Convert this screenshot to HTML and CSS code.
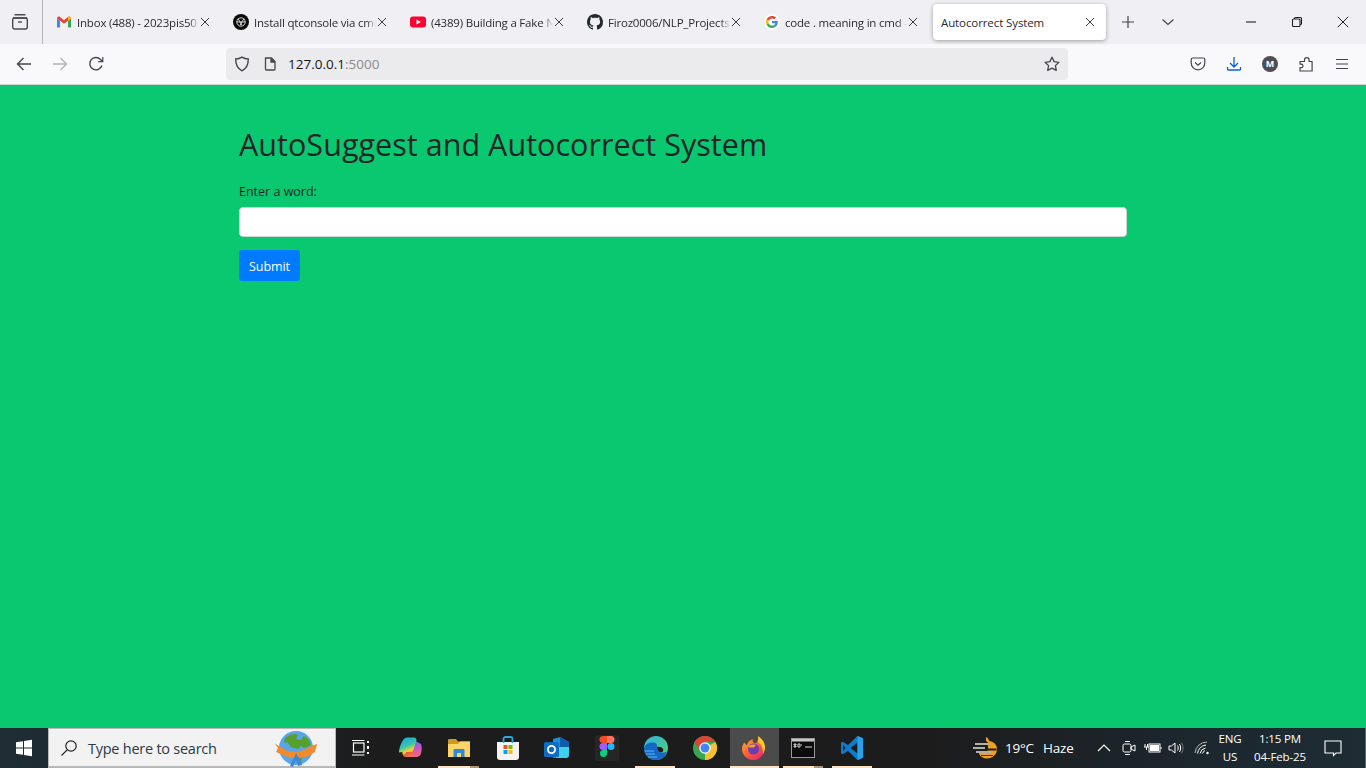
FILE: index.html
```html
<!DOCTYPE html>
<html lang="en">
<head>
<meta charset="utf-8">
<title>Autocorrect System</title>
<link rel="stylesheet" href="styles.css">
</head>
<body>
<svg class="defs" width="0" height="0" aria-hidden="true">
  <symbol id="x" viewBox="0 0 12 12"><path d="M2 2l8 8M10 2l-8 8" fill="none" stroke="currentColor" stroke-width="1"/></symbol>
</svg>
<div class="browser">
  <header class="tabbar">
    <div class="archive">
      <svg width="18" height="18" viewBox="0 0 18 18" fill="none" stroke="#4a4a50" stroke-width="1.4"><path d="M3.5 1.8h11M2 5h14"/><rect x="1.7" y="5" width="14.6" height="11" rx="2"/><path d="M7 9h4"/></svg>
    </div>
    <div class="tab">
      <svg class="fav" width="16" height="16" viewBox="0 0 16 16"><path d="M1 13.5V4l7 5 7-5v9.500h-3V7.500L8 10.500 4 7.500v6z" fill="#fff"/><path d="M1 4.500V13.500h3V6.800z" fill="#4285f4"/><path d="M15 4.500V13.500h-3V6.800z" fill="#34a853"/><path d="M1 4.500C1 2.600 3 2 4 3l4 3.200L12 3c1-1 3-.4 3 1.500L12 6.800 8 9.800 4 6.800z" fill="#ea4335"/><path d="M12 3c1-1 3-.4 3 1.500L12 6.800z" fill="#fbbc04"/></svg>
      <span class="title">Inbox (488) - 2023pis5012@gmail</span>
      <svg class="close" width="12" height="12"><use href="#x"/></svg>
    </div>
    <div class="tab">
      <svg class="fav" width="16" height="16" viewBox="0 0 16 16"><circle cx="8" cy="8" r="8" fill="#0a0a0a"/><g fill="none" stroke="#e8e8e8" stroke-width=".9"><circle cx="8" cy="8" r="4.200"/><path d="M5 4.500l4 6.800M11 4.500l-4 6.800M3.800 8h8.400"/></g></svg>
      <span class="title">Install qtconsole via cmd line</span>
      <svg class="close" width="12" height="12"><use href="#x"/></svg>
    </div>
    <div class="tab">
      <svg class="fav" width="16" height="16" viewBox="0 0 16 16"><rect y="2.500" width="16" height="11" rx="3" fill="#ff0033"/><path d="M6.500 5.500v5L11 8z" fill="#fff"/></svg>
      <span class="title">(4389) Building a Fake News App</span>
      <svg class="close" width="12" height="12"><use href="#x"/></svg>
    </div>
    <div class="tab">
      <svg class="fav" width="16" height="16" viewBox="0 0 16 16"><path fill="#24292f" d="M8 0C3.580 0 0 3.580 0 8c0 3.540 2.290 6.530 5.470 7.590.4.070.55-.17.55-.38 0-.19-.01-.82-.01-1.490-2.010.37-2.530-.49-2.690-.94-.09-.23-.48-.94-.82-1.130-.28-.15-.68-.52-.01-.53.63-.01 1.080.58 1.230.82.72 1.210 1.870.87 2.330.66.07-.52.28-.87.51-1.070-1.780-.2-3.640-.89-3.640-3.950 0-.87.31-1.590.82-2.150-.08-.2-.36-1.020.08-2.120 0 0 .67-.21 2.200.82.64-.18 1.320-.27 2-.27.68 0 1.360.09 2 .27 1.530-1.040 2.200-.82 2.200-.82.44 1.100.16 1.920.08 2.120.51.56.82 1.270.82 2.150 0 3.070-1.870 3.750-3.650 3.950.29.25.54.73.54 1.480 0 1.070-.01 1.930-.01 2.200 0 .21.15.46.55.38A8.013 8.013 0 0016 8c0-4.420-3.580-8-8-8z"/></svg>
      <span class="title">Firoz0006/NLP_Projects: code</span>
      <svg class="close" width="12" height="12"><use href="#x"/></svg>
    </div>
    <div class="tab">
      <svg class="fav" width="16" height="16" viewBox="-8 -8 64 64"><circle cx="24" cy="24" r="32" fill="#fff"/><path fill="#ea4335" d="M24 9.500c3.540 0 6.710 1.220 9.210 3.600l6.850-6.850C35.900 2.380 30.470 0 24 0 14.620 0 6.510 5.380 2.560 13.220l7.980 6.190C12.430 13.720 17.740 9.500 24 9.500z"/><path fill="#4285f4" d="M46.980 24.550c0-1.570-.15-3.090-.38-4.550H24v9.020h12.940c-.58 2.960-2.260 5.480-4.780 7.180l7.730 6c4.510-4.180 7.090-10.360 7.090-17.650z"/><path fill="#fbbc05" d="M10.530 28.590c-.48-1.450-.76-2.990-.76-4.590s.27-3.140.76-4.590l-7.980-6.190C.92 16.460 0 20.120 0 24c0 3.880.92 7.540 2.560 10.780l7.970-6.190z"/><path fill="#34a853" d="M24 48c6.480 0 11.930-2.130 15.890-5.810l-7.730-6c-2.150 1.450-4.920 2.300-8.160 2.300-6.260 0-11.570-4.220-13.470-9.910l-7.980 6.190C6.510 42.620 14.620 48 24 48z"/></svg>
      <span class="title">code . meaning in cmd - Google</span>
      <svg class="close" width="12" height="12"><use href="#x"/></svg>
    </div>
    <div class="tab tab-active">
      <span class="title">Autocorrect System</span>
      <svg class="close" width="12" height="12"><use href="#x"/></svg>
    </div>
    <button class="tab-btn plus" aria-label="New tab">
      <svg width="14" height="14" viewBox="0 0 14 14" fill="none" stroke="#45454b" stroke-width="1.200"><path d="M7 1v12M1 7h12"/></svg>
    </button>
    <button class="tab-btn chev" aria-label="List tabs">
      <svg width="14" height="14" viewBox="0 0 14 14" fill="none" stroke="#45454b" stroke-width="1.200"><path d="M1.500 4.500L7 9.500l5.500-5"/></svg>
    </button>
    <div class="winctl">
      <div class="wbtn"><svg width="12" height="12" viewBox="0 0 12 12" fill="none" stroke="#222" stroke-width="1.100"><path d="M1 6h10"/></svg></div>
      <div class="wbtn"><svg width="12" height="12" viewBox="0 0 12 12" fill="none" stroke="#222" stroke-width="1.100"><rect x="1.500" y="3" width="7.500" height="7.500" rx="1"/><path d="M3.500 3V2.500c0-.6.400-1 1-1h5c.6 0 1 .4 1 1v5c0 .6-.4 1-1 1H9"/></svg></div>
      <div class="wbtn"><svg width="12" height="12" viewBox="0 0 12 12" fill="none" stroke="#222" stroke-width="1"><path d="M.8.800l10.400 10.400M11.200.800L.8 11.200"/></svg></div>
    </div>
  </header>

  <nav class="navbar">
    <div class="navgroup">
      <svg class="navicon" width="16" height="16" viewBox="0 0 16 16" fill="none" stroke="#45454b" stroke-width="1.400"><path d="M15 8H1.500M7.500 2L1.500 8l6 6"/></svg>
      <svg class="navicon" width="16" height="16" viewBox="0 0 16 16" fill="none" stroke="#b3b3b8" stroke-width="1.400"><path d="M1 8h13.500M8.500 2l6 6-6 6"/></svg>
      <svg class="navicon" width="16" height="16" viewBox="0 0 16 16" fill="none" stroke="#45454b" stroke-width="1.400"><path d="M13.900 9.500A6.200 6.200 0 1 1 12.500 3.400L14.500 5.300"/><path d="M14.800 1v4.600h-4.600" stroke-width="1.200"/></svg>
    </div>
    <div class="urlbar">
      <svg class="shield" width="16" height="16" viewBox="0 0 16 16" fill="none" stroke="#45454b" stroke-width="1.400"><path d="M8 1.200c2 1.300 4 1.800 6.300 1.800 0 5.800-1.800 9.700-6.300 11.800C3.500 12.700 1.700 8.800 1.700 3 4 3 6 2.500 8 1.200z"/></svg>
      <svg class="page" width="14" height="14" viewBox="0 0 14 14" fill="none" stroke="#45454b" stroke-width="1.300"><path d="M2.500 1h6l3.500 3.500V12a1 1 0 0 1-1 1H3.500a1 1 0 0 1-1-1V1z"/><path d="M8 1v4h4" fill="#45454b"/></svg>
      <span class="url">127.0.0.1<span class="url-dim">:5000</span></span>
      <svg class="star" width="16" height="16" viewBox="0 0 16 16" fill="none" stroke="#45454b" stroke-width="1.300"><path d="M8 1.200l2.100 4.400 4.800.7-3.500 3.300.9 4.800L8 12.100l-4.300 2.300.9-4.800L1.100 6.300l4.800-.7z" stroke-linejoin="round"/></svg>
    </div>
    <div class="navtools">
      <svg class="tool" width="16" height="16" viewBox="0 0 16 16" fill="none" stroke="#45454b" stroke-width="1.200"><path d="M2.600 2h10.800c.8 0 1.400.6 1.400 1.400V7A6.800 6.800 0 0 1 1.200 7V3.400C1.200 2.600 1.800 2 2.600 2z"/><path d="M5 6.500l3 2.800 3-2.800"/></svg>
      <svg class="tool" width="16" height="16" viewBox="0 0 16 16" fill="none" stroke="#0b63d6" stroke-width="1.300"><path d="M8 1v9.500M4 7l4 4 4-4M1.500 11v2.200c0 .5.300.8.800.8h11.400c.5 0 .8-.3.800-.8V11"/></svg>
      <div class="avatar">M</div>
      <svg class="tool" width="16" height="16" viewBox="0 0 16 16" fill="none" stroke="#45454b" stroke-width="1.200" stroke-linejoin="round"><path d="M2 5.500h4.500V4a2.300 2.300 0 0 1 4.600 0v1.500h3v9.500H2v-3.300h1.200a1.800 1.800 0 0 0 0-3.600H2z"/></svg>
      <svg class="tool" width="16" height="16" viewBox="0 0 16 16" fill="none" stroke="#45454b" stroke-width="1.200"><path d="M2 3.500h12M2 8h12M2 12.500h12"/></svg>
    </div>
  </nav>
</div>

<main class="page-area">
  <div class="container">
    <h1>AutoSuggest and Autocorrect System</h1>
    <form class="form">
      <label class="label" for="word">Enter a word:</label>
      <input class="input" id="word" type="text">
      <button class="submit" type="button">Submit</button>
    </form>
  </div>
</main>

<footer class="taskbar">
  <div class="start">
    <svg width="18" height="18" viewBox="0 0 18 18" fill="#fff"><path d="M1 3.200l7-1v6.300H1zM9 2l8-1.200v7.700H9zM1 9.500h7v6.300l-7-1zM9 9.500h8v7.700L9 16z"/></svg>
  </div>
  <div class="search">
    <svg width="18" height="18" viewBox="0 0 18 18" fill="none" stroke="#222" stroke-width="1.200"><circle cx="11" cy="7" r="5.200"/><path d="M7.200 10.800L1.500 16.500"/></svg>
    <span class="search-text">Type here to search</span>
    <svg class="globe" width="42" height="38" viewBox="0 0 42 38">
      <circle cx="21" cy="18" r="17" fill="#5aa5e8"/>
      <path d="M10 8c5-4 10-5 13-3l-2 4 5 1 3-4c4 2 6 5 7 9l-6 3-4-2-3 3-7-2-4-5-3 1z" fill="#58a02c"/>
      <path d="M22 22l6 1-2 10-4 1z" fill="#58a02c"/>
      <path d="M0 14c4 1 8 6 14 7 5 1 10 1 14-1 4-1 9-5 14-6l-2 8c-5 3-9 6-15 6-6 1-11 0-17-3-4-1-6-3-7-3l2-4z" fill="#f28a2e"/>
      <path d="M15 36c2-6 5-9 6-13 2 4 5 7 6 12l-4 1-2-6-3 7z" fill="#3f87d9"/>
    </svg>
  </div>
  <div class="apps">
    <div class="app">
      <svg width="20" height="20" viewBox="0 0 20 20" fill="none" stroke="#fff" stroke-width="1.200"><rect x="2.500" y="5" width="10.500" height="9"/><path d="M1 2.500h12.500M1 17h12.500"/><path d="M17 3v2M17 8v3M17 14v2" stroke-width="2"/></svg>
    </div>
    <div class="app">
      <svg width="24" height="24" viewBox="0 0 24 24"><defs><linearGradient id="cpa" x1="0" y1="0" x2=".4" y2="1"><stop offset="0" stop-color="#1a9fe8"/><stop offset=".55" stop-color="#35c8a8"/><stop offset=".8" stop-color="#f5d030"/><stop offset="1" stop-color="#f28a3c"/></linearGradient><linearGradient id="cpb" x1="0" y1="0" x2=".4" y2="1"><stop offset="0" stop-color="#3a6ee8"/><stop offset=".5" stop-color="#a05be0"/><stop offset="1" stop-color="#f2608c"/></linearGradient><linearGradient id="cpc" x1="0" y1="0" x2="1" y2="1"><stop offset="0" stop-color="#e8484a"/><stop offset="1" stop-color="#f28a3c"/></linearGradient></defs><path d="M15 3.500L23 8c.9 1.500.9 7 0 9.500-.8 2-2.500 3.500-4.500 3.500H8l5-6c1-2 2-7 2-11.500z" fill="url(#cpb)"/><path d="M5.500 3.500C6.500 2 8 1.500 10 1.500h6c2 0 2.500 1.500 2.500 3l-4 12c-.8 2-2 3.500-4 3.500H7c-2 0-3-2-2.500-4l-3.500.5C1 12 3.500 6 5.500 3.500z" fill="url(#cpa)"/><path d="M8.500 16h8c-1 3-3 5-5 5H8c-2 0-3-1.500-3-2.500 1 .5 2.500-.5 3.500-2.500z" fill="url(#cpc)"/></svg>
    </div>
    <div class="app run-multi">
      <svg width="24" height="22" viewBox="0 0 24 22"><path d="M1 3a1 1 0 0 1 1-1h7l2 2.500h12V20H1z" fill="#c99a28"/><path d="M1 7h10l2-2.500h10V20H1z" fill="#fbd566"/><path d="M6.500 13a1 1 0 0 1 1-1h9a1 1 0 0 1 1 1v7h-3.500v-4h-4v4H6.500z" fill="#2f89d9"/></svg>
    </div>
    <div class="app">
      <svg width="24" height="26" viewBox="0 0 24 26"><path d="M1 7h22v15a3 3 0 0 1-3 3H4a3 3 0 0 1-3-3z" fill="#f3f3f3"/><path d="M7.500 8V4a2 2 0 0 1 2-2h5a2 2 0 0 1 2 2v4" fill="none" stroke="#29a8e0" stroke-width="1.800"/><path d="M7.500 10h4v4h-4z" fill="#f25022"/><path d="M12.500 10h4v4h-4z" fill="#7fba00"/><path d="M7.500 15h4v4h-4z" fill="#00a4ef"/><path d="M12.500 15h4v4h-4z" fill="#ffb900"/></svg>
    </div>
    <div class="app">
      <svg width="26" height="24" viewBox="0 0 26 24"><path d="M9 3l7-2 9 5v13l-5 3H9z" fill="#1b8fd8"/><path d="M12 11h13v8c0 2-1 3-3 3H12z" fill="#3fd0f0"/><path d="M16 1l9 5v5H16z" fill="#0f5ca8"/><rect x="0" y="6" width="15" height="15" rx="1.500" fill="#0f6cc4"/><circle cx="7.500" cy="13.500" r="3.600" fill="none" stroke="#fff" stroke-width="1.800"/></svg>
    </div>
    <div class="app">
      <svg width="24" height="26" viewBox="0 0 24 26"><rect width="24" height="26" rx="3" fill="#262626"/><path d="M12 1H8a3.500 3.500 0 0 0 0 7h4z" fill="#f24e1e"/><path d="M12 1h4a3.500 3.500 0 0 1 0 7h-4z" fill="#ff7262"/><path d="M12 8H8a3.500 3.500 0 0 0 0 7h4z" fill="#a259ff"/><circle cx="16" cy="11.500" r="3.500" fill="#1abcfe"/><path d="M8 15h4v3.500A3.500 3.500 0 1 1 8 15z" fill="#0acf83"/></svg>
    </div>
    <div class="app run">
      <svg width="26" height="26" viewBox="0 0 26 26"><defs><linearGradient id="edg" x1="0" y1="0" x2="1" y2="1"><stop offset="0" stop-color="#2bb4e8"/><stop offset="1" stop-color="#58d060"/></linearGradient></defs><circle cx="13" cy="13" r="12" fill="url(#edg)"/><path d="M14 12c2.500-.5 5 0 6 2 .6 1.500 0 2.500-1 3-2 .8-5-.5-5-5z" fill="#1c1c1c"/><path d="M1 13c1.500-4 5-5.500 8.500-5.500 3.500 0 5 2 4.500 4.500-.8 2 1 5 5 5.500 2 .2 3.500 0 5-1-1 4-4.500 8.500-11 8.500C6.500 25 1 20 1 13z" fill="#1467c4"/><path d="M2 16h9M3 19h9M5 22h9" stroke="#5fb8ee" stroke-width="1.200"/></svg>
    </div>
    <div class="app">
      <svg width="24" height="24" viewBox="0 0 24 24"><circle cx="12" cy="12" r="12" fill="#34a853"/><path d="M12 12L22.400 6A12 12 0 0 1 12 24z" fill="#fbc02d"/><path d="M1.600 6A12 12 0 0 1 22.400 6H12L6.800 15z" fill="#db4437"/><circle cx="12" cy="12" r="5.800" fill="#fff"/><circle cx="12" cy="12" r="4.500" fill="#4285f4"/></svg>
    </div>
    <div class="app app-active run">
      <svg width="24" height="24" viewBox="0 0 24 24"><defs><linearGradient id="fxa" x1="0" y1="0" x2=".8" y2="1"><stop offset="0" stop-color="#ffb92e"/><stop offset=".5" stop-color="#ff6a2e"/><stop offset="1" stop-color="#e8266e"/></linearGradient></defs><path d="M16 0c1 3 5 5 6 9 1.500 6-2 15-10.500 15C5 24 0 19 0 13c0-2.500 1-5 2.500-6.500C3 8 4 9 5 9c.5-3 3-5 6-6-1 2 0 3 1.500 4C15 8 16.500 4 16 0z" fill="url(#fxa)"/><path d="M16 0c3 2 7 6 7 11 0 3-1 5-2 7 0-5-1-9-5-12 .5-2 .5-4 0-6z" fill="#ffcb2e"/><circle cx="11.500" cy="13" r="5.500" fill="#6a3db0"/><path d="M6 11c2-2.500 5-3 8-2l-2 2.500H8z" fill="#ff9a2e"/></svg>
    </div>
    <div class="app run-multi">
      <svg width="24" height="20" viewBox="0 0 24 20"><rect x=".5" y=".5" width="23" height="19" fill="#0c0c0c" stroke="#9a9a9a"/><rect x="1" y="1" width="22" height="2.500" fill="#c8c8c8"/><path d="M3 6h2v1H3zM3 8h2v1H3zM7 6h2v3H7zM10 7h1M14 9h7" stroke="#d8d8d8" stroke-width="1"/></svg>
    </div>
    <div class="app run">
      <svg width="24" height="24" viewBox="0 0 24 24"><path d="M17.500 0L7.800 9.300 3 5.700 1 6.700v10.600l2 1 4.800-3.600 9.700 9.300L23 21.800V2.200z" fill="#0f7ccb"/><path d="M17.500 6.500L10.500 12l7 5.500z" fill="#1c1c1c"/><path d="M3 8.800L5.500 12 3 15.200z" fill="#1c1c1c"/><path d="M17.500 0L23 2.200v19.600L17.500 24z" fill="#27a3ea"/></svg>
    </div>
  </div>
  <div class="tray">
    <svg class="weather" width="25" height="24" viewBox="0 0 25 24"><path d="M13 1c2 1 3 2.500 3 4 4 .5 8 3 8 8 0 5.500-4.500 9.500-10 9.500-4 0-7-2-8.500-6h9v-2h9v-2H15V6.500L13 5z" fill="#f0a020"/><path d="M2 8h14M0 12h12M3 16h16" stroke="#b5b0a6" stroke-width="2"/><path d="M8 19.500h12" stroke="#3a3a3a" stroke-width="1"/></svg>
    <span class="temp">19°C</span>
    <span class="haze">Haze</span>
    <svg class="ti t-chev" width="14" height="14" viewBox="0 0 14 14" fill="none" stroke="#fff" stroke-width="1.200"><path d="M1 10l6-6 6 6"/></svg>
    <svg class="ti t-meet" width="14" height="18" viewBox="0 0 14 18" fill="none" stroke="#fff" stroke-width="1"><rect x="1" y="5" width="8" height="8" rx="1.500"/><path d="M9 8l4-2v6l-4-2zM3 2.500h5M3 15.500h5"/></svg>
    <svg class="ti t-bat" width="18" height="14" viewBox="0 0 18 14" fill="none" stroke="#fff" stroke-width="1"><path d="M1 3v3M3.500 3v3M0 6h5M2.500 6v3"/><rect x="5" y="3" width="11" height="8"/><rect x="6.500" y="4.500" width="8" height="5" fill="#fff"/><path d="M17 6v2"/></svg>
    <svg class="ti t-vol" width="16" height="16" viewBox="0 0 16 16" fill="none" stroke="#fff" stroke-width="1"><path d="M1 6v4h2.500L7 13V3L3.500 6z"/><path d="M9.500 5.500c1 1.500 1 3.500 0 5M11.500 4c1.500 2.500 1.500 5.500 0 8"/><path d="M13.500 2.500c2 3.500 2 7.500 0 11" stroke="#777"/></svg>
    <svg class="ti t-wifi" width="16" height="16" viewBox="0 0 16 16" fill="none" stroke="#fff" stroke-width="1"><path d="M1 13A12 12 0 0 1 13 2" stroke="#bbb"/><path d="M3.500 13.500A9.500 9.500 0 0 1 12 5M6 13.500A7 7 0 0 1 11.500 8M8.500 13.500a4 4 0 0 1 2.500-3"/><circle cx="13.500" cy="13" r="1.200" fill="#fff" stroke="none"/></svg>
    <div class="lang"><span>ENG</span><span>US</span></div>
    <div class="clock"><span>1:15 PM</span><span>04-Feb-25</span></div>
    <svg class="ti t-note" width="18" height="18" viewBox="0 0 18 18" fill="none" stroke="#fff" stroke-width="1.100"><path d="M1 2h16v12h-5l-2.500 2.500V14H1z"/></svg>
    <div class="show-desktop"></div>
  </div>
</footer>
</body>
</html>
```

FILE: styles.css
```css
* { box-sizing: border-box; }
html, body { height: 100%; }
body {
  margin: 0;
  height: 768px;
  width: 1366px;
  overflow: hidden;
  display: flex;
  flex-direction: column;
  font-family: "Open Sans", "Noto Sans", sans-serif;
  background: #09c86f;
}
.defs { position: absolute; }

/* Browser chrome */
.browser { flex: none; }
.tabbar {
  height: 44px;
  background: #f0f0f4;
  display: flex;
  align-items: center;
}
.archive {
  width: 43px;
  height: 44px;
  border-right: 1px solid #b5b5b9;
  display: flex;
  align-items: center;
  justify-content: center;
  padding-right: 2px;
  margin-right: 4px;
}
.tab {
  width: 177px;
  height: 36px;
  padding-left: 9px;
  display: flex;
  align-items: center;
  font-size: 11.5px;
  letter-spacing: -.2px;
  color: #2b2a33;
}
.fav { flex: none; margin-right: 5px; }
.title {
  flex: 1;
  white-space: nowrap;
  overflow: hidden;
  min-width: 0;
  -webkit-mask-image: linear-gradient(to right, #000 92%, transparent);
  mask-image: linear-gradient(to right, #000 92%, transparent);
}
.close { flex: none; margin: 0 13.5px 0 0; color: #3a3a40; }
.tab-active {
  width: 173px;
  margin-left: 1px;
  padding-left: 8px;
  background: #fff;
  border-radius: 4px;
  box-shadow: 0 1px 4px rgba(0, 0, 0, .35);
  letter-spacing: -.1px;
}
.tab-active .title { -webkit-mask-image: none; mask-image: none; }
.tab-active .close { margin: 0 10px 0 0; }
.tab-btn {
  border: 0;
  background: none;
  padding: 0;
  display: flex;
  align-items: center;
  justify-content: center;
  width: 14px;
  height: 14px;
}
.plus { margin-left: 15px; }
.chev { margin-left: 26px; }
.winctl { margin-left: auto; display: flex; }
.wbtn {
  width: 46px;
  height: 44px;
  display: flex;
  align-items: center;
  justify-content: center;
}

.navbar {
  height: 41px;
  background: #f9f9fb;
  border-bottom: 1px solid #cfcfd4;
  display: flex;
  align-items: center;
  padding-bottom: 1px;
}
.navgroup {
  width: 226px;
  flex: none;
  display: flex;
  padding-left: 16px;
  gap: 20px;
}
.navicon { flex: none; }
.urlbar {
  width: 842px;
  height: 32px;
  background: #ebebee;
  border-radius: 4px;
  display: flex;
  align-items: center;
  padding: 0 8px;
  color: #15141a;
}
.shield { margin-right: 13px; }
.page { margin-right: 11px; }
.url { font-size: 13.5px; }
.url-dim { color: #8a8a8f; }
.star { margin-left: auto; }
.navtools {
  margin-left: 122px;
  display: flex;
  align-items: center;
  gap: 20px;
}
.tool { flex: none; }
.avatar {
  width: 16px;
  height: 16px;
  border-radius: 50%;
  background: #4e4e54;
  color: #fff;
  font-size: 9px;
  font-weight: 700;
  display: flex;
  align-items: center;
  justify-content: center;
}

/* Page */
.page-area { flex: 1; min-height: 0; }
.container { width: 888px; margin-left: 239px; padding-top: 37px; color: #212529; }
h1 {
  margin: 0;
  font-weight: 400;
  font-size: 30.5px;
  line-height: 44px;
  letter-spacing: .04px;
}
.form { display: flex; flex-direction: column; align-items: flex-start; margin-top: 16px; }
.label { font-size: 12.5px; line-height: 20px; margin-bottom: 5px; }
.input {
  width: 888px;
  height: 30px;
  background: #fff;
  border: 1px solid #ced4da;
  border-radius: 4px;
  margin-bottom: 13px;
}
.submit {
  width: 61px;
  height: 31px;
  background: #007bff;
  color: #fff;
  border: 0;
  border-radius: 3px;
  font: 12.5px/1 "Open Sans", sans-serif;
  letter-spacing: -.1px;
  padding: 4px 0 0;
}

/* Taskbar */
.taskbar {
  flex: none;
  height: 40px;
  display: flex;
  align-items: stretch;
  background: linear-gradient(to right, #1f2d35 0, #1c1c1c 380px, #1c1c1c 920px, #1c2830 1230px, #1e2c34 100%);
  color: #fff;
}
.start {
  width: 48px;
  display: flex;
  align-items: center;
  justify-content: center;
}
.search {
  width: 288px;
  background: #f2f2f2;
  border: 1px solid #b8b8b8;
  border-bottom-width: 2px;
  display: flex;
  align-items: center;
  padding-left: 11px;
  color: #2a3b4a;
  position: relative;
}
.search-text { font-size: 14.5px; letter-spacing: -.25px; margin-left: 10px; padding-top: 1px; }
.globe { position: absolute; left: 226px; top: 1px; }
.apps { display: flex; }
.app {
  width: 49.2px;
  display: flex;
  align-items: center;
  justify-content: center;
  position: relative;
}
.app-active { background: #4b4b4b; }
.run::after, .run-multi::after {
  content: "";
  position: absolute;
  left: 4px;
  right: 5px;
  bottom: 0;
  height: 2px;
  background: #fde3c2;
}
.app-active::after { left: 0; right: 0; }
.run-multi::after {
  background: linear-gradient(to right, #fde3c2 78%, #a89580 78%);
}
.tray {
  margin-left: auto;
  display: flex;
  align-items: center;
  font-size: 13.5px;
}
.weather { margin-right: 7px; }
.temp { letter-spacing: -.2px; width: 38px; }
.haze { letter-spacing: -.2px; width: 54px; }
.ti { flex: none; }
.t-chev { margin-right: 11px; }
.t-meet { margin-right: 8px; }
.t-bat { margin-right: 6px; }
.t-vol { margin-right: 10px; }
.lang, .clock {
  display: flex;
  flex-direction: column;
  align-items: center;
  font-size: 11.5px;
  line-height: 18px;
  letter-spacing: -.15px;
}
.lang { width: 30px; margin-left: 5px; }
.clock { width: 66px; margin-left: 2px; }
.t-note { margin-left: 11px; margin-right: 24px; }
.show-desktop { width: 1px; height: 40px; background: #5a6a72; margin-left: -1px; }
```
